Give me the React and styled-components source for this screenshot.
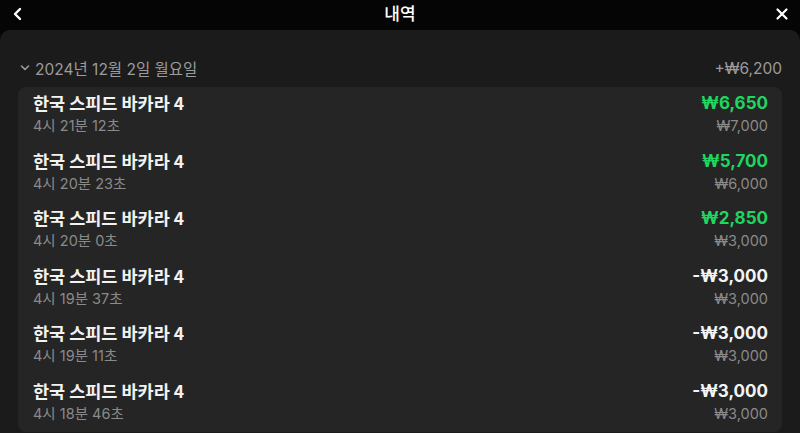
import React from 'react'
import styled, { createGlobalStyle } from 'styled-components'

const GlobalStyle = createGlobalStyle`
  html, body {
    margin: 0;
    padding: 0;
    background: #050505;
    height: 433px;
    overflow: hidden;
  }
  body {
    font-family: "Inter", "Noto Sans CJK KR", sans-serif;
  }
`

const Page = styled.div`
  width: 800px;
  height: 433px;
  display: flex;
  flex-direction: column;
  background: #050505;
  overflow: hidden;
`

const Header = styled.div`
  height: 30px;
  flex-shrink: 0;
  display: flex;
  align-items: center;
  justify-content: space-between;
  padding: 0 10px 0 10px;
  color: #fff;
`

const Title = styled.div`
  font-size: 17px;
  font-weight: 500;
  font-family: "Noto Sans CJK KR", sans-serif;
  margin-top: -5px;
`

const IconButton = styled.div`
  width: 16px;
  height: 16px;
  display: flex;
  align-items: center;
  justify-content: center;
  margin-top: -3px;
`

const Body = styled.div`
  flex: 1;
  background: #1b1b1b;
  border-radius: 10px 10px 0 0;
  padding: 27px 18px 0 18px;
`

const DateRow = styled.div`
  display: flex;
  justify-content: space-between;
  align-items: center;
  height: 22px;
  margin-bottom: 8px;
  color: #9c9c9c;
  font-size: 15.5px;
`

const DateLabel = styled.div`
  display: flex;
  align-items: center;
  gap: 5px;
  padding-left: 2px;
`

const Card = styled.div`
  background: #252525;
  border-radius: 8px;
  padding: 0 14px 0 15px;
  margin-bottom: 10px;
`

const Row = styled.div`
  height: 57.5px;
  box-sizing: border-box;
  padding-top: 5px;
  display: flex;
  justify-content: space-between;
`

const Col = styled.div`
  display: flex;
  flex-direction: column;
  align-items: ${({ right }) => (right ? 'flex-end' : 'flex-start')};
  gap: 2px;
`

const Name = styled.div`
  color: #f2f2f2;
  font-size: 17.5px;
  font-weight: 700;
  line-height: 22px;
  font-family: "Noto Sans CJK KR", sans-serif;
`

const Amount = styled.div`
  color: ${({ win }) => (win ? '#1fd660' : '#f4f4f4')};
  font-size: 17px;
  font-weight: 700;
  line-height: 22px;
`

const Sub = styled.div`
  color: #8a8a8a;
  font-size: 14.5px;
  line-height: 20px;
`

const rows = [
  { time: '4시 21분 12초', amount: '₩6,650', bet: '₩7,000', win: true },
  { time: '4시 20분 23초', amount: '₩5,700', bet: '₩6,000', win: true },
  { time: '4시 20분 0초', amount: '₩2,850', bet: '₩3,000', win: true },
  { time: '4시 19분 37초', amount: '-₩3,000', bet: '₩3,000', win: false },
  { time: '4시 19분 11초', amount: '-₩3,000', bet: '₩3,000', win: false },
  { time: '4시 18분 46초', amount: '-₩3,000', bet: '₩3,000', win: false },
]

export default function App() {
  return (
    <Page>
      <GlobalStyle />
      <Header>
        <IconButton>
          <svg width="12" height="14" viewBox="0 0 12 14" fill="none">
            <path d="M8 2 L3 7 L8 12" stroke="#fff" strokeWidth="2.4" strokeLinecap="round" strokeLinejoin="round" />
          </svg>
        </IconButton>
        <Title>내역</Title>
        <IconButton>
          <svg width="14" height="14" viewBox="0 0 14 14" fill="none">
            <path d="M2.5 2.5 L11.5 11.5 M11.5 2.5 L2.5 11.5" stroke="#fff" strokeWidth="2.2" strokeLinecap="round" />
          </svg>
        </IconButton>
      </Header>
      <Body>
        <DateRow>
          <DateLabel>
            <svg width="10" height="8" viewBox="0 0 10 8" fill="none">
              <path d="M1.5 2 L5 5.5 L8.5 2" stroke="#9c9c9c" strokeWidth="1.6" strokeLinecap="round" strokeLinejoin="round" />
            </svg>
            2024년 12월 2일 월요일
          </DateLabel>
          <div>+₩6,200</div>
        </DateRow>
        <Card>
          {rows.map((item, index) => (
            <Row key={index}>
              <Col>
                <Name>한국 스피드 바카라 4</Name>
                <Sub>{item.time}</Sub>
              </Col>
              <Col right>
                <Amount win={item.win}>{item.amount}</Amount>
                <Sub>{item.bet}</Sub>
              </Col>
            </Row>
          ))}
        </Card>
      </Body>
    </Page>
  )
}
